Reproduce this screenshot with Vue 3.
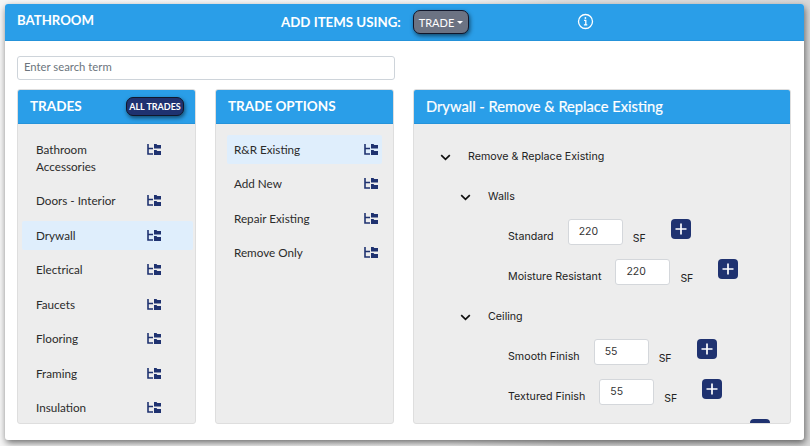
<script setup>
const trades = [
  { name: 'Bathroom Accessories' }, { name: 'Doors - Interior' }, { name: 'Drywall', active: true },
  { name: 'Electrical' }, { name: 'Faucets' }, { name: 'Flooring' }, { name: 'Framing' }, { name: 'Insulation' }
]
const options = [
  { name: 'R&R Existing', active: true }, { name: 'Add New' }, { name: 'Repair Existing' }, { name: 'Remove Only' }
]
const wallRows = [{ label: 'Standard', value: 220 }, { label: 'Moisture Resistant', value: 220 }]
const ceilingRows = [{ label: 'Smooth Finish', value: 55 }, { label: 'Textured Finish', value: 55 }]
</script>

<template>
  <div class="page">
    <main class="card">
      <header class="topbar">
        <div class="room">BATHROOM</div>
        <div class="using">ADD ITEMS USING:</div>
        <button class="pill trade">TRADE<span class="caret"></span></button>
        <svg class="info" width="17" height="17" viewBox="0 0 17 17" fill="none" stroke="#fff">
          <circle cx="8.5" cy="8.5" r="7" stroke-width="1.3" />
          <path d="M7 7.4h1.8v4.2M6.9 11.8h3.4" stroke-width="1.3" />
          <circle cx="8.4" cy="5" r=".9" fill="#fff" stroke="none" />
        </svg>
      </header>
      <div class="content">
        <input class="search" placeholder="Enter search term" />
        <div class="columns">
          <section class="panel">
            <div class="panel-head">
              <h2>TRADES</h2>
              <button class="pill all">ALL TRADES</button>
            </div>
            <ul class="list">
              <li v-for="t in trades" :key="t.name" :class="{ active: t.active }">
                <span class="name">{{ t.name }}</span>
                <svg class="tree" width="14" height="11" viewBox="0 0 14 11">
                  <path d="M1 0v10h5M1 4.5h5" fill="none" stroke="#1f3270" stroke-width="1.6" />
                  <path d="M7 0h2.5l.8 .9H14v3.6H7zM7 6h2.5l.8 .9H14V11H7z" fill="#1f3270" />
                </svg>
              </li>
            </ul>
          </section>
          <section class="panel">
            <div class="panel-head"><h2>TRADE OPTIONS</h2></div>
            <ul class="list opts">
              <li v-for="o in options" :key="o.name" :class="{ active: o.active }">
                <span class="name">{{ o.name }}</span>
                <svg class="tree" width="14" height="11" viewBox="0 0 14 11">
                  <path d="M1 0v10h5M1 4.5h5" fill="none" stroke="#1f3270" stroke-width="1.6" />
                  <path d="M7 0h2.5l.8 .9H14v3.6H7zM7 6h2.5l.8 .9H14V11H7z" fill="#1f3270" />
                </svg>
              </li>
            </ul>
          </section>
          <section class="panel">
            <div class="panel-head"><h2 class="detail-title">Drywall - Remove &amp; Replace Existing</h2></div>
            <div class="detail">
              <div class="node level1">
                <svg class="chev" width="11" height="7" viewBox="0 0 11 7"><path d="M1.2 1.2 5.5 5.3 9.8 1.2" fill="none" stroke="#111" stroke-width="1.7" /></svg>
                <span>Remove &amp; Replace Existing</span>
              </div>
              <div class="node level2">
                <svg class="chev" width="11" height="7" viewBox="0 0 11 7"><path d="M1.2 1.2 5.5 5.3 9.8 1.2" fill="none" stroke="#111" stroke-width="1.7" /></svg>
                <span>Walls</span>
              </div>
              <div v-for="r in wallRows" :key="r.label" class="row">
                <span class="label">{{ r.label }}</span>
                <input class="qty" :value="r.value" />
                <span class="unit">SF</span>
                <button class="add"><svg width="12" height="12" viewBox="0 0 12 12"><path d="M6 .5v11M.5 6h11" stroke="#fff" stroke-width="1.7" /></svg></button>
              </div>
              <div class="node level2">
                <svg class="chev" width="11" height="7" viewBox="0 0 11 7"><path d="M1.2 1.2 5.5 5.3 9.8 1.2" fill="none" stroke="#111" stroke-width="1.7" /></svg>
                <span>Ceiling</span>
              </div>
              <div v-for="r in ceilingRows" :key="r.label" class="row">
                <span class="label">{{ r.label }}</span>
                <input class="qty" :value="r.value" />
                <span class="unit">SF</span>
                <button class="add"><svg width="12" height="12" viewBox="0 0 12 12"><path d="M6 .5v11M.5 6h11" stroke="#fff" stroke-width="1.7" /></svg></button>
              </div>
              <div class="row lone">
                <button class="add"><svg width="12" height="12" viewBox="0 0 12 12"><path d="M6 .5v11M.5 6h11" stroke="#fff" stroke-width="1.7" /></svg></button>
              </div>
            </div>
          </section>
        </div>
      </div>
    </main>
  </div>
</template>

<style>
html, body { margin: 0; background: #e6e6e6; overflow: hidden; }
</style>

<style scoped>
.page { width: 810px; height: 446px; padding: 4px 6px 6px 5px; box-sizing: border-box; font-family: Lato, "Noto Sans", sans-serif; overflow: hidden; background: linear-gradient(90deg, #f6f6f6, #f4f4f4 55%, #dedede 70%, #d8d8d8); }
.card { height: 436px; background: #fff; border-radius: 3px; box-shadow: 1px 3px 7px rgba(0, 0, 0, .55); overflow: hidden; display: flex; flex-direction: column; }
.topbar { height: 37px; flex: none; box-sizing: border-box; background: #2a9ee8; border-bottom: 1px solid #2593da; color: #fff; display: flex; align-items: flex-start; }
.room { margin: 8px 0 0 12px; width: 264px; font-size: 13.2px; font-weight: 700; line-height: 17px; }
.using { margin-top: 9px; width: 132px; font-size: 13.3px; font-weight: 700; line-height: 18px; }
.pill { font-family: inherit; color: #fff; border: 1.5px solid #11162a; border-radius: 7px; padding: 0; box-shadow: 1px 2px 4px rgba(0, 0, 0, .55); box-sizing: border-box; }
.trade { margin-top: 6px; width: 56px; height: 24px; background: #6c7383; font-size: 11px; font-weight: 400; display: flex; align-items: center; justify-content: center; gap: 3px; }
.caret { border: 3.5px solid transparent; border-top-color: #fff; border-bottom: 0; }
.info { margin: 8.5px 0 0 108px; }
.content { padding: 15px 12px 0; }
.search { display: block; box-sizing: border-box; width: 378px; height: 24px; border: 1px solid #ced4da; border-radius: 3px; padding: 0 6px 3px; font-family: inherit; font-size: 11.3px; outline: none; }
.search::placeholder { color: #6c757d; opacity: 1; }
.columns { margin-top: 9px; display: grid; grid-template-columns: 179px 179px 378px; column-gap: 19px; }
.panel { height: 335px; background: #ededed; border: 1px solid #dedede; border-radius: 3px; box-sizing: border-box; overflow: hidden; }
.panel-head { height: 35px; margin: -1px -1px 0; box-sizing: border-box; background: #2a9ee8; border-bottom: 1px solid #2593da; padding: 0 12px 0 13px; display: flex; align-items: center; justify-content: space-between; }
h2 { margin: 0 0 1px; color: #fff; font-size: 13.5px; font-weight: 700; }
.detail-title { font-size: 14.7px; font-weight: 400; -webkit-text-stroke: .2px #fff; }
.all { width: 58px; height: 19px; background: #1f3270; font-size: 9px; font-weight: 700; }
.list { list-style: none; margin: 0; padding: 10.7px 2px 0 4px; display: flex; flex-direction: column; gap: 5.5px; }
.list li { display: flex; justify-content: space-between; align-items: flex-start; padding: 6px 32px 6px 14px; font-size: 11.7px; line-height: 17px; color: #2b2b2b; border-radius: 2px; }
.name { width: 90px; }
.tree { margin-top: 3px; flex: none; }
.list li.active { background: #dfeefc; }
.opts { padding: 10.7px 11px 0 11px; }
.opts li { padding: 6px 4px 6px 7px; }
.opts .name { width: auto; }
.detail { padding: 12px 0 0 26px; font-family: Inter, sans-serif; font-size: 10.7px; color: #222; }
.node { height: 40px; box-sizing: border-box; display: flex; align-items: flex-start; line-height: 16px; padding-top: 13px; }
.node .chev { margin-top: 5px; flex: none; }
.level1 span { margin-left: 17px; }
.level2 { padding-left: 20px; }
.level2 span { margin-left: 17px; }
.row { height: 40px; padding: 3px 0 0 68px; box-sizing: border-box; display: flex; align-items: flex-start; }
.label { margin-top: 11px; line-height: 14px; white-space: nowrap; }
.qty { margin-left: 14px; width: 55px; height: 26px; box-sizing: border-box; border: 1px solid #d4d7db; border-radius: 3px; padding: 0 0 2px 10px; font-family: inherit; font-size: 10.5px; color: #333; outline: none; }
.unit { margin: 13px 26px 0 10px; line-height: 13px; font-size: 10.5px; width: 12px; }
.add { width: 20px; height: 20px; padding: 0; border: 0; border-radius: 4px; background: #1f3270; display: flex; align-items: center; justify-content: center; }
.lone { padding-left: 310px; }
</style>
